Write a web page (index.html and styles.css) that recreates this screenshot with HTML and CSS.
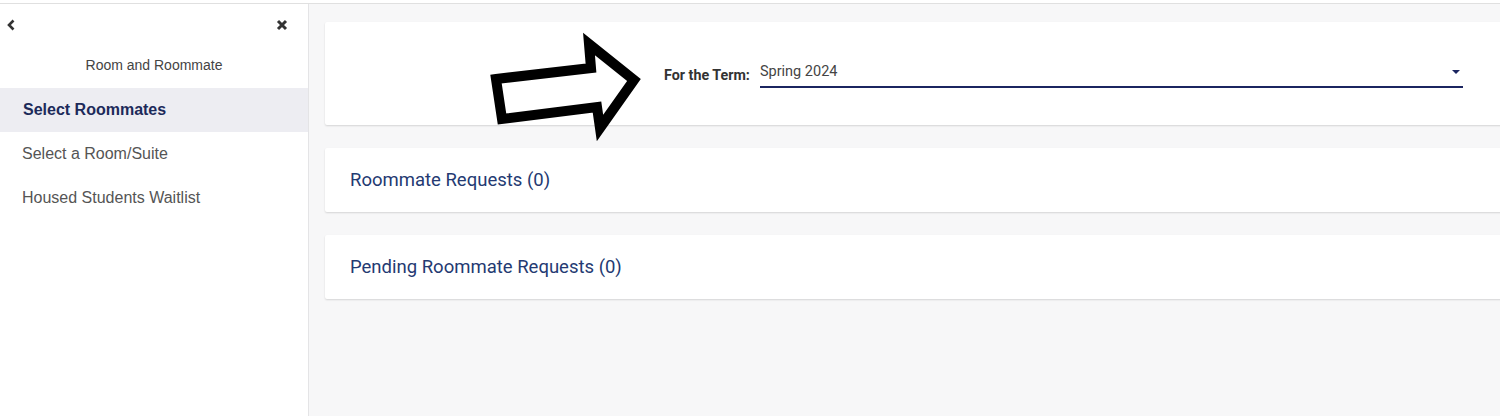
FILE: index.html
```html
<!DOCTYPE html>
<html>
<head>
<meta charset="utf-8">
<link rel="stylesheet" href="styles.css">
</head>
<body>
<div class="topbar"></div>
<div class="layout">
  <aside class="sidebar">
    <div class="side-head">
      <svg class="chev" width="10" height="12" viewBox="0 0 10 12"><path d="M7.5 1.5 L3 6 L7.5 10.5" fill="none" stroke="#333" stroke-width="2.6"/></svg>
      <svg class="close" width="12" height="12" viewBox="0 0 12 12"><path d="M2 2 L10 10 M10 2 L2 10" fill="none" stroke="#333" stroke-width="3"/></svg>
    </div>
    <div class="side-title">Room and Roommate</div>
    <nav class="side-nav">
      <div class="nav-item active">Select Roommates</div>
      <div class="nav-item">Select a Room/Suite</div>
      <div class="nav-item">Housed Students Waitlist</div>
    </nav>
  </aside>
  <main class="main">
    <section class="card card-term">
      <div class="term-row">
        <span class="term-label">For the Term:</span>
        <div class="term-select">
          <span class="term-value">Spring 2024</span>
          <span class="caret"></span>
        </div>
      </div>
    </section>
    <section class="card card-short">
      <h2 class="card-title">Roommate Requests (0)</h2>
    </section>
    <section class="card card-short">
      <h2 class="card-title">Pending Roommate Requests (0)</h2>
    </section>
  </main>
</div>
<svg class="annot" width="1500" height="416" viewBox="0 0 1500 416">
  <path d="M496 79 L591 68 L589 44 L634 80 L600 128 L597 107 L502 119 Z" fill="#fff" stroke="#000" stroke-width="10" stroke-linejoin="miter" stroke-miterlimit="3"/>
</svg>
</body>
</html>
```
FILE: styles.css
```css
html, body {
  margin: 0;
  padding: 0;
}
body {
  width: 1500px;
  height: 416px;
  overflow: hidden;
  background: #f7f7f8;
  font-family: "Liberation Sans", Arial, sans-serif;
  position: relative;
}
.topbar {
  height: 3px;
  background: #fff;
  border-bottom: 1px solid #e0e0e0;
}
.layout {
  display: flex;
  height: 412px;
}
.sidebar {
  width: 308px;
  flex: none;
  background: #fff;
  border-right: 1px solid #e4e4e6;
}
.side-head {
  display: flex;
  justify-content: space-between;
  align-items: center;
  padding: 15px 20px 0 6px;
  height: 12px;
}
.side-title {
  text-align: center;
  font-size: 14px;
  color: #444;
  margin-top: 26px;
  height: 16px;
  line-height: 16px;
}
.side-nav {
  margin-top: 15px;
}
.nav-item {
  height: 44px;
  line-height: 44px;
  padding-left: 22px;
  font-size: 16px;
  color: #555;
}
.nav-item.active {
  background: #ededf2;
  color: #1c2a5a;
  font-weight: bold;
  padding-left: 23px;
}
.main {
  flex: 1;
  padding: 18px 0 0 16px;
  overflow: hidden;
}
.card {
  background: #fff;
  margin-right: -30px;
  border-radius: 2px;
  box-shadow: 0 1px 2px rgba(0,0,0,0.14);
  margin-bottom: 23px;
}
.card-term {
  height: 103px;
  box-sizing: border-box;
  padding-top: 37px;
}
.term-row {
  display: flex;
  align-items: center;
  padding-left: 339px;
}
.term-label {
  font-family: Roboto, "Liberation Sans", sans-serif;
  font-weight: bold;
  font-size: 14.3px;
  color: #333;
  margin-right: 10px;
  margin-top: 3px;
}
.term-select {
  width: 703px;
  height: 29px;
  box-sizing: border-box;
  border-bottom: 2px solid #1b2560;
  display: flex;
  align-items: center;
  justify-content: space-between;
  padding-bottom: 2px;
}
.term-value {
  font-family: Roboto, "Liberation Sans", sans-serif;
  font-size: 14.5px;
  color: #444;
}
.caret {
  width: 0;
  height: 0;
  border-left: 4px solid transparent;
  border-right: 4px solid transparent;
  border-top: 4px solid #1b2560;
  margin-right: 3px;
}
.card-short {
  height: 64px;
  display: flex;
  align-items: center;
}
.card-title {
  margin: 0;
  padding-left: 25px;
  font-family: Roboto, "Liberation Sans", sans-serif;
  font-weight: normal;
  font-size: 18.5px;
  color: #243a72;
}
.annot {
  position: absolute;
  left: 0;
  top: 0;
  pointer-events: none;
}
```
